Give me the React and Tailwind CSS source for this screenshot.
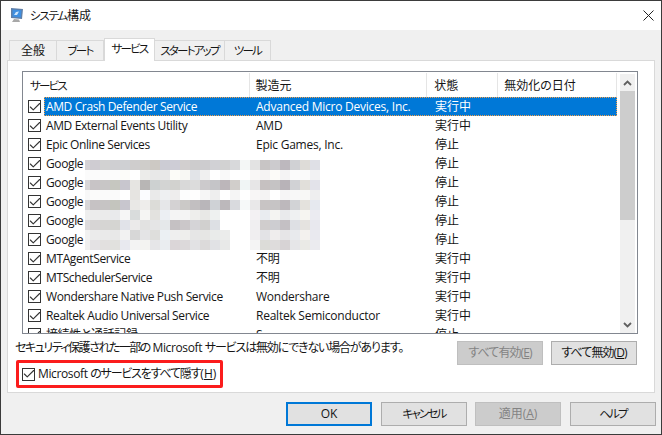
import { Check } from "lucide-react";

const services = [
  { name: "AMD Crash Defender Service", maker: "Advanced Micro Devices, Inc.", status: "実行中", selected: true },
  { name: "AMD External Events Utility", maker: "AMD", status: "実行中" },
  { name: "Epic Online Services", maker: "Epic Games, Inc.", status: "停止" },
  { name: "Google", maker: "", status: "停止" },
  { name: "Google", maker: "", status: "停止" },
  { name: "Google", maker: "", status: "停止" },
  { name: "Google", maker: "", status: "停止" },
  { name: "Google", maker: "", status: "停止" },
  { name: "MTAgentService", maker: "不明", status: "実行中" },
  { name: "MTSchedulerService", maker: "不明", status: "実行中" },
  { name: "Wondershare Native Push Service", maker: "Wondershare", status: "実行中" },
  { name: "Realtek Audio Universal Service", maker: "Realtek Semiconductor", status: "実行中" },
  { name: "接続性と通話記録", maker: "S", status: "停止" },
];

// blurred part of the list, one line per 10px band
const mosaic = [
  "d4d2d6 cfccd2 d2d2d2 cfcfd2 cfd0d3 cfcdcd cfcdca cdc9c4 ccccd4 cecdd6 d2cfcf cdcccd cdcccf d1d1d5 d2d2d2 d8d9db f4f7f6 e3e3e3 c8c5c5 cccbce bdb8be d0d1d4 dedcd8 dfe0e6",
  "fbfbfb fbfbfb fbfbfb fcfcfc fcfcf9 ffffff ececea e8e8e8 e8e8e8 fcfcf8 f8f8f4 e2e4e8 f0f0f0 ffffff f9f9f9 ffffff ffffff f9f7f6 f5f3f3 fcfbf8 f4f3f4 fbfbfb fafafa f2f2f3",
  "d8d6d8 c8c4c6 c8c6c6 c6c7c0 c8c6ce e6e5e2 b8b6b5 cdd1d1 d3d4d3 d2d2cf d9d9d9 dcdcdc cccacc c5c5c8 bcb6ba d1cecb f0f5f5 e7e6e7 c6c1c1 c5c3c4 b8b3b8 d1d2d5 e1dfda e3e3ea",
  "f8f8f8 fbfbfa fafafa fafafa ffffff e6e4e1 fbfcff eaeaea eef0f2 eeeded fcfdfd fffefe f6f6f6 eeeeee ffffff f5f5f5 ffffff f8f6f6 f4f3f3 ffffff f6f5f6 f8f8f8 f8f8f6 eeeeef",
  "d8d6d8 c6c2c4 c6c4c4 c4c5be c8c6ce e9e8e6 eeedeb dcdcd8 e6e7e9 d4d2d3 cbc9c7 c2bfc1 b9b6ba cfd2d6 bcb8bb d9dade f6f9f9 e9e8e9 c8c4c4 c6c4c5 bdb8bc d2d3d6 e4e2dd e6e9ef",
  "eeeeee ececec ebebeb e9eaec f6f6f6 d9dcdc f5f5f3 e3e2df eceff3 f4f4f4 f4f4f4 eeeeec e8e8e6 eef1f0 ffffff ffffff ffffff f3f1f3 e9ecf0 f4f4f2 e9eaec eff1f2 f6f5f1 ebebf1",
  "dddbdd d7d5d5 d6d5d3 d5d5d2 e1e3e9 ebeaea e2e2e1 e5e5e6 e5e8ea c5c1c3 cbc7c9 d5d4d7 d1d0cf dde0e4 ffffff ffffff ffffff f0eff1 d0cdcd cdcdd1 c4c0c4 dee0e4 e5e3e0 e8e8ee",
  "f1f1f1 ebebeb eaeaea e8e8e8 f2f2f2 d7d7d7 e4e4e6 dededc ebf0f3 efefef eeeeec e6e6e6 e6e6e4 e9ebea ebeceb ffffff ffffff f0eef0 e3e3e6 efeded e6e5e7 e8eaed f3f1ee e9e9ef",
  "efefef e4e2e4 e2e0df e1e1de e8e9ef f3f3f3 f3f3f1 e6e6e8 eaedf0 dbd6d8 dcd9da e2e2e4 dcdada e1e2e5 e8e9e8 ffffff ffffff f4f4f4 dcdcd8 dedcdc d7d3d5 e6e6e8 eaeae6 ebebef",
];

// katakana in the original font is much narrower than Noto's
function Kana({ children }) {
  return <span className="whitespace-nowrap text-[11.5px] tracking-[-1.8px]">{children}</span>;
}

function CheckBox() {
  return (
    <span className="flex h-[13px] w-[13px] shrink-0 items-center justify-center border border-[#333] bg-white">
      <Check size={14} strokeWidth={1.9} className="shrink-0 text-[#333]" />
    </span>
  );
}

function Tab({ children, width, active }) {
  return (
    <div
      className={
        active
          ? "z-10 -mb-px flex h-[23px] items-center justify-center border border-b-0 border-[#d9d9d9] bg-white pb-[2px]"
          : "flex h-[20px] items-center justify-center border border-b-0 border-l-0 border-[#d9d9d9] bg-[#f0f0f0] first:border-l"
      }
      style={{ width }}
    >
      {children}
    </div>
  );
}

function Button({ children, disabled, primary, className }) {
  let look = "border border-[#adadad] bg-[#e1e1e1]";
  if (disabled) look = "border border-[#bfbfbf] bg-[#cccccc] text-[#838383]";
  if (primary) look = "border-2 border-[#0078d7] bg-[#e1e1e1]";
  return (
    <div className={`flex h-[24px] w-[86px] items-center justify-center ${look} ${className || ""}`}>
      {children}
    </div>
  );
}

function ScrollBar() {
  return (
    <div className="mt-px flex h-[259px] w-[15px] flex-col bg-[#f0f0f0]">
      <div className="flex h-[17px] items-center justify-center">
        <svg width="9" height="6" viewBox="0 0 9 6">
          <path d="M1 5 L4.5 1.5 L8 5" fill="none" stroke="#606060" strokeWidth="1.8" />
        </svg>
      </div>
      <div className="h-[129px] bg-[#cdcdcd]"></div>
      <div className="flex-1"></div>
      <div className="flex h-[17px] items-center justify-center">
        <svg width="9" height="6" viewBox="0 0 9 6">
          <path d="M1 1 L4.5 4.5 L8 1" fill="none" stroke="#606060" strokeWidth="1.8" />
        </svg>
      </div>
    </div>
  );
}

export default function App() {
  return (
    <div className="flex h-[435px] w-[662px] flex-col overflow-hidden border border-[#3b3b3b] bg-[#f0f0f0] text-[12px] leading-[16px] text-[#151515] [font-family:'Open_Sans','Noto_Sans_CJK_JP',sans-serif] [font-feature-settings:'palt']">
      {/* title bar */}
      <div className="flex h-[29px] shrink-0 items-center justify-between bg-white pl-2 pr-2">
        <div className="flex items-center gap-[6px]">
          <svg width="15" height="17" viewBox="0 0 15 17">
            <path d="M2 1 L14 2 L13 12 L2 11 Z" fill="#5f7fa8" />
            <path d="M3.5 2.5 L12.5 3.2 L11.8 10.5 L3.5 9.8 Z" fill="#3f8fe0" />
            <path d="M5 8 L7 5 L10 4.5 L8 8 Z" fill="#cfe6fb" />
            <path d="M5 12 L10 12.5 L11 15 L3 15 Z" fill="#a8a8a8" />
          </svg>
          <span>
            <span className="text-[11.5px] tracking-[-1.2px]">システム</span>構成
          </span>
        </div>
        <svg width="11" height="11" viewBox="0 0 11 11" className="mr-[-1px]">
          <path d="M0.5 0.5 L10.5 10.5 M10.5 0.5 L0.5 10.5" stroke="#222" strokeWidth="1" />
        </svg>
      </div>

      {/* tabs */}
      <div className="flex h-[30px] shrink-0 items-end pl-[8px]">
        <Tab width={48}>全般</Tab>
        <Tab width={47}><Kana>ブート</Kana></Tab>
        <Tab width={51} active><Kana>サービス</Kana></Tab>
        <Tab width={70}><Kana>スタートアップ</Kana></Tab>
        <Tab width={46}><Kana>ツール</Kana></Tab>
      </div>

      {/* panel */}
      <div className="ml-[6px] h-[333px] w-[648px] shrink-0 border border-[#d9d9d9] bg-white pl-[7px] pt-[10px]">
        <div className="relative ml-[7px] flex h-[263px] w-[616px] overflow-hidden border border-[#828790] pt-px">
          <div className="w-[594px] shrink-0">
            <div className="flex h-[24px]">
              <div className="w-[227px] border-r border-[#e5e5e5] pl-[7px] pt-[5px]"><Kana>サービス</Kana></div>
              <div className="w-[178px] border-r border-[#e5e5e5] pl-[6px] pt-[5px]">製造元</div>
              <div className="w-[71px] border-r border-[#e5e5e5] pl-[7px] pt-[5px]">状態</div>
              <div className="w-[119px] border-r border-[#e5e5e5] pl-[6px] pt-[5px]">無効化の日付</div>
            </div>
            {services.map((row, i) => (
              <div key={i} className="flex h-[19px] items-center pl-[5px]">
                <CheckBox />
                <div
                  className={
                    row.selected
                      ? "ml-[3px] flex h-[19px] w-[573px] items-center border border-dotted border-[#f5a04a] bg-[#0078d7] pl-px text-white"
                      : "ml-[3px] flex h-[19px] w-[573px] items-center pl-[2px]"
                  }
                >
                  <div className="w-[210px] shrink-0 whitespace-nowrap tracking-[-0.38px]">{row.name}</div>
                  <div className="w-[179px] shrink-0 whitespace-nowrap tracking-[-0.24px]">{row.maker}</div>
                  <div>{row.status}</div>
                </div>
              </div>
            ))}
          </div>
          <div className="ml-[3px]">
            <ScrollBar />
          </div>

          {/* blurred names over the list */}
          <div className="absolute left-[62px] top-[88px] grid grid-cols-[5px_repeat(23,10px)] grid-rows-[repeat(9,10px)]">
            {mosaic.map((line, y) =>
              line.split(" ").map((c, x) => <div key={y + "-" + x} style={{ backgroundColor: "#" + c }}></div>)
            )}
          </div>
        </div>

        <div className="flex">
          <div className="w-[442px] shrink-0 pt-[6px]">
            <div className="whitespace-nowrap">
              <span className="tracking-[-1.5px]">セキュリティ保護された一部の</span>
              <span className="tracking-[-0.38px]"> Microsoft </span>
              <span className="tracking-[-1.15px]">サービスは無効にできない場合があります。</span>
            </div>
            <div className="ml-px mt-[4px] flex h-[28px] w-[207px] items-center gap-[3px] rounded-[2px] border-[3px] border-[#fb1c1c] pl-[3px]">
              <CheckBox />
              <span className="whitespace-nowrap">
                <span className="tracking-[-0.38px]">Microsoft </span>
                <span className="tracking-[-1.2px]">のサービスをすべて隠す</span>(<span className="underline">H</span>)
              </span>
            </div>
          </div>
          <div className="flex gap-[8px] pt-[7px]">
            <Button disabled>
              <span className="tracking-[-0.9px]">
                すべて有効(<span className="underline">E</span>)
              </span>
            </Button>
            <Button>
              <span className="tracking-[-0.9px]">
                すべて無効(<span className="underline">D</span>)
              </span>
            </Button>
          </div>
        </div>
      </div>

      {/* dialog buttons */}
      <div className="mt-[9px] flex justify-end gap-[9px] pr-[5px]">
        <Button primary>OK</Button>
        <Button><Kana>キャンセル</Kana></Button>
        <Button disabled className="-ml-px">
          <span>
            適用(<span className="underline">A</span>)
          </span>
        </Button>
        <Button><Kana>ヘルプ</Kana></Button>
      </div>
    </div>
  );
}
